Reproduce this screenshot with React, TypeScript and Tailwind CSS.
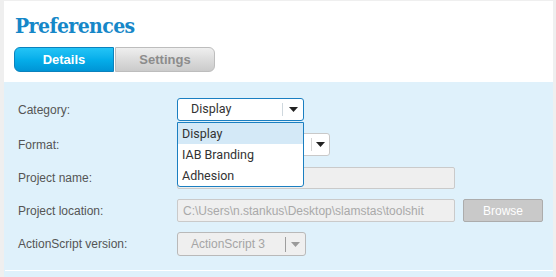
import React from 'react';

const Caret = ({ color = '#222' }: { color?: string }) => (
  <svg width="9" height="5" viewBox="0 0 9 5">
    <path d="M0 0h9L4.5 5z" fill={color} />
  </svg>
);

const labelCls = 'w-[159px] shrink-0 text-[12px] text-[#555] font-["Liberation_Sans",Arial,sans-serif]';

export default function App() {
  const categories = ['Display', 'IAB Branding', 'Adhesion'];

  return (
    <div className="w-[556px] h-[277px] bg-[#efefef] pl-[4px] pr-[3px] pt-[1px] overflow-hidden">
      {/* Header */}
      <div className="bg-white h-[81px] pl-[10px] pt-[12px]">
        <h1 className='text-[21px] leading-[26px] font-bold text-[#1687c8] tracking-[-0.6px] font-["DejaVu_Serif_Condensed","DejaVu_Serif",serif] pl-[1px]'>
          Preferences
        </h1>
        <div className='flex mt-[8px] font-["Liberation_Sans",Arial,sans-serif] text-[13px] font-bold'>
          <button className="w-[100px] h-[25px] rounded-l-[6px] border border-[#0b82bd] bg-gradient-to-b from-[#22c4f6] via-[#05aeea] to-[#0095d6] text-white">
            Details
          </button>
          <button className="w-[100px] h-[25px] ml-[1px] rounded-r-[6px] border border-[#bdbdbd] bg-gradient-to-b from-[#efefef] via-[#dcdcdc] to-[#cbcbcb] text-[#8c8c8c]">
            Settings
          </button>
        </div>
      </div>

      {/* Panel */}
      <div className="bg-[#dff1fb] h-[195px] pl-[14px] pt-[16px] flex flex-col">
        <div className="flex items-center h-[23px]">
          <span className={labelCls}>Category:</span>
          <div className="relative">
            <div className='w-[127px] h-[23px] bg-white border border-[#1b7fc1] rounded-[3px] flex items-center font-["Roboto",sans-serif] text-[12.5px] text-[#333]'>
              <span className="flex-1 pl-[13px]">Display</span>
              <span className="w-px h-[13px] bg-[#cfd8de]" />
              <span className="w-[20px] flex justify-center"><Caret /></span>
            </div>
            {/* Open list */}
            <div className='absolute left-0 top-[24px] z-10 w-[127px] bg-white border border-[#1b7fc1] rounded-b-[3px] font-["Roboto",sans-serif] text-[12.5px] text-[#333] overflow-hidden'>
              {categories.map((c, i) => (
                <div
                  key={c}
                  className={`h-[21px] leading-[21px] pl-[4px] ${i === 0 ? 'bg-[#d4e9f7]' : ''}`}
                >
                  {c}
                </div>
              ))}
            </div>
          </div>
        </div>

        <div className="flex items-center h-[23px] mt-[12px]">
          <span className={labelCls}>Format:</span>
          <div className="w-[153px] h-[23px] bg-white border border-[#c9c9c9] rounded-[3px] flex items-center">
            <span className="flex-1" />
            <span className="w-px h-[13px] bg-[#d5d5d5]" />
            <span className="w-[17px] flex justify-center"><Caret /></span>
          </div>
        </div>

        <div className="flex items-center h-[22px] mt-[11px]">
          <span className={labelCls}>Project name:</span>
          <div className="w-[278px] h-[22px] bg-[#efefef] border border-[#cacaca] rounded-[2px]" />
        </div>

        <div className="flex items-center h-[23px] mt-[10px]">
          <span className={labelCls}>Project location:</span>
          <div className='w-[278px] h-[23px] bg-[#efefef] border border-[#cacaca] rounded-[2px] flex items-center pl-[5px] text-[12px] text-[#a9a9a9] font-["Liberation_Sans",Arial,sans-serif]'>
            C:\Users\n.stankus\Desktop\slamstas\toolshit
          </div>
          <button className='ml-[8px] w-[80px] h-[23px] bg-[#c9c9c9] border border-[#acacac] rounded-[2px] text-white text-[12px] font-["Liberation_Sans",Arial,sans-serif]'>
            Browse
          </button>
        </div>

        <div className="flex items-center h-[24px] mt-[10px]">
          <span className={labelCls}>ActionScript version:</span>
          <div className='w-[129px] h-[24px] bg-[#efefef] border border-[#b9b9b9] rounded-[3px] flex items-center font-["Liberation_Sans",Arial,sans-serif] text-[12px] text-[#a5a5a5]'>
            <span className="flex-1 pl-[13px]">ActionScript 3</span>
            <span className="w-px h-[15px] bg-[#9e9e9e]" />
            <span className="w-[19px] flex justify-center"><Caret color="#9a9a9a" /></span>
          </div>
        </div>

        <div className="mt-auto mb-[6px] ml-[-13px] h-[1px] bg-white" />
      </div>
    </div>
  );
}
